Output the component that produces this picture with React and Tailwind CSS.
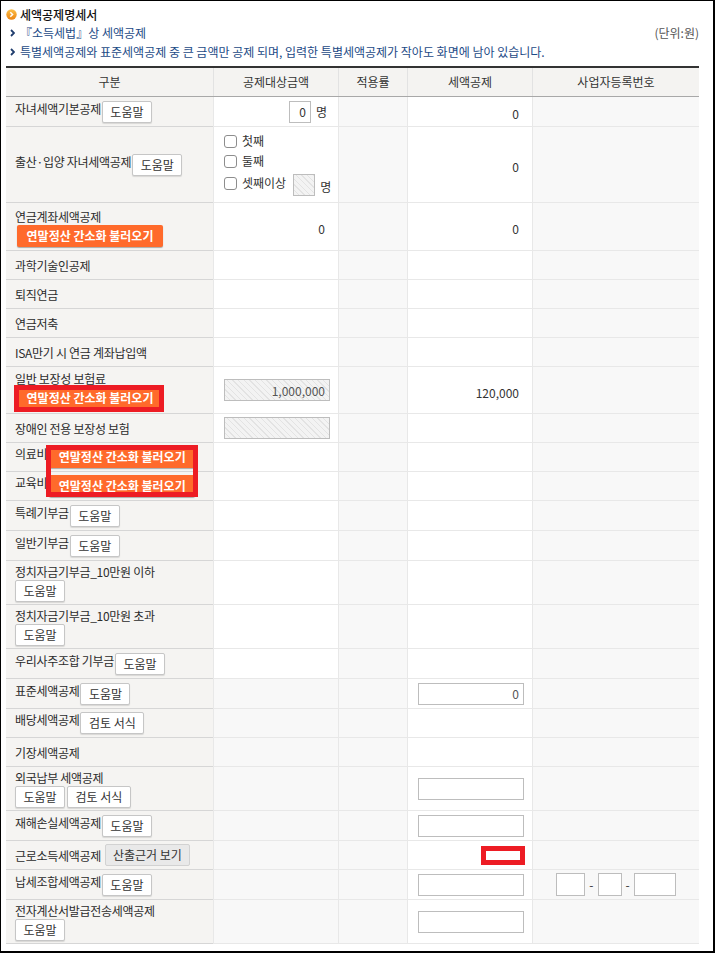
import React from "react";

const cols = "grid grid-cols-[207px_125px_69px_125px_167px]";
const hatch =
  "bg-[image:repeating-linear-gradient(45deg,#f3f3f3_0px,#f3f3f3_3px,#e3e3e3_3px,#e3e3e3_4px)]";

const HelpBtn = ({ label = "도움말", w = "w-[50px]", className = "" }) => (
  <button
    type="button"
    className={`${w} h-[22px] shrink-0 rounded-[2px] border border-[#c6c6c6] bg-white text-[12px] leading-[20px] text-[#333] shadow-[0_1px_1px_rgba(0,0,0,0.12)] ${className}`}
  >
    {label}
  </button>
);

const OrangeBtn = ({ className = "" }) => (
  <button
    type="button"
    className={`h-[22px] w-[146px] shrink-0 rounded-[2px] bg-[#ff6a2b] text-[12px] font-bold leading-[22px] text-white shadow-[0_1px_1px_rgba(0,0,0,0.3)] ${className}`}
  >
    연말정산 간소화 불러오기
  </button>
);

const Row = ({ h, label, c2, c4, c5, gray2, labelClass = "" }) => (
  <div className={`${cols} ${h}`}>
    <div
      className={`flex flex-col justify-center border-b border-[#d6d6d6] bg-[#f5f4f2] pl-[9px] ${labelClass}`}
    >
      {label}
    </div>
    <div
      className={`border-b border-l border-[#e8e8e8] ${gray2 ? "bg-[#f8f8f8]" : "bg-white"}`}
    >
      {c2}
    </div>
    <div className="border-b border-l border-[#e8e8e8] bg-[#f8f8f8]" />
    <div className="border-b border-l border-[#e8e8e8] bg-white">{c4}</div>
    <div className="border-b border-l border-[#e8e8e8] bg-[#f8f8f8]">{c5}</div>
  </div>
);

const Text = ({ children }) => (
  <span className="whitespace-nowrap leading-[15px] tracking-[-0.3px] text-[#2b2b2b]">
    {children}
  </span>
);

const Inline = ({ text, btn = <HelpBtn /> }) => (
  <div className="flex items-start">
    <Text>{text}</Text>
    <span className="ml-[1px]">{btn}</span>
  </div>
);

const Val = ({ children }) => (
  <div className="flex h-full items-center justify-end pt-[5px] pr-[13px]">
    {children}
  </div>
);

const BoxInput = ({ value = "", hatched }) => (
  <div className="flex h-full items-center pl-[10px]">
    <input
      readOnly
      value={value}
      className={`h-[22px] w-[106px] border border-[#bdbdbd] px-[4px] text-right text-[12px] text-[#555] outline-none ${hatched ? hatch : "bg-white"}`}
    />
  </div>
);

const Check = ({ label }) => (
  <div className="flex h-[20px] items-center">
    <span className="h-[13px] w-[13px] rounded-[3px] border border-[#8d8d8d] bg-white" />
    <span className="ml-[5px] leading-[16px]">{label}</span>
  </div>
);

const Chevron = () => (
  <svg width="5" height="8" viewBox="0 0 5 8" className="shrink-0">
    <path d="M1 1 L4 4 L1 7" fill="none" stroke="#1f3d6d" strokeWidth="1.8" />
  </svg>
);

const TitleIcon = () => (
  <svg width="11" height="11" viewBox="0 0 11 11" className="shrink-0">
    <defs>
      <linearGradient id="og" x1="0" y1="0" x2="0" y2="1">
        <stop offset="0" stopColor="#fbc04a" />
        <stop offset="1" stopColor="#ec8412" />
      </linearGradient>
    </defs>
    <circle cx="5.5" cy="5.5" r="5.2" fill="url(#og)" />
    <path d="M4.3 3.2 L6.6 5.5 L4.3 7.8" fill="none" stroke="#fff" strokeWidth="1.5" />
  </svg>
);

export default function App() {
  return (
    <div className="relative h-[953px] w-[715px] border-t border-r-2 border-b-2 border-l border-black bg-white font-['Noto_Sans_CJK_KR','Noto_Sans',sans-serif] text-[12px] text-[#333]">
      <div className="pt-[5px] pl-[5px] pr-[14px]">
        <div className="flex h-[17px] items-center">
          <TitleIcon />
          <span className="ml-[3px] font-medium text-[#111]">세액공제명세서</span>
        </div>
        <div className="flex h-[19px] items-center pl-[4px]">
          <Chevron />
          <span className="ml-[5px] text-[#1c4a86]">『소득세법』상 세액공제</span>
          <span className="ml-auto text-[#555]">(단위:원)</span>
        </div>
        <div className="flex h-[19px] items-center pl-[4px]">
          <Chevron />
          <span className="ml-[5px] text-[#1c4a86]">
            특별세액공제와 표준세액공제 중 큰 금액만 공제 되며, 입력한 특별세액공제가 작아도 화면에 남아 있습니다.
          </span>
        </div>
      </div>

      <div className="mt-[5px] ml-[5px] w-[693px]">
        <div className="h-[2px] bg-[#333]" />
        <div className={`${cols} h-[29px] border-b border-[#a8a8a8] bg-[#f4f3f1]`}>
          <div className="flex items-center justify-center">구분</div>
          <div className="flex items-center justify-center border-l border-[#e2e2e2]">공제대상금액</div>
          <div className="flex items-center justify-center border-l border-[#e2e2e2]">적용률</div>
          <div className="flex items-center justify-center border-l border-[#e2e2e2]">세액공제</div>
          <div className="flex items-center justify-center border-l border-[#e2e2e2]">사업자등록번호</div>
        </div>

        <Row
          h="h-[30px]"
          label={<Inline text="자녀세액기본공제" />}
          c2={
            <div className="flex h-full items-center justify-end pr-[11px]">
              <input
                readOnly
                value="0"
                className="h-[22px] w-[22px] border border-[#bdbdbd] bg-white pr-[4px] text-right text-[12px] outline-none"
              />
              <span className="ml-[5px]">명</span>
            </div>
          }
          c4={<Val>0</Val>}
        />
        <Row
          h="h-[76px]"
          label={<Inline text="출산·입양 자녀세액공제" />}
          c2={
            <div className="flex flex-col pt-[4px] pl-[10px]">
              <Check label="첫째" />
              <Check label="둘째" />
              <div className="flex h-[26px] items-start">
                <div className="mt-[2px]">
                  <Check label="셋째이상" />
                </div>
                <span className={`mt-[3px] ml-[7px] h-[22px] w-[22px] border border-[#bdbdbd] ${hatch}`} />
                <span className="mt-[8px] ml-[5px] leading-[16px]">명</span>
              </div>
            </div>
          }
          c4={<Val>0</Val>}
        />
        <Row
          h="h-[48px]"
          labelClass="pt-[3px]"
          label={
            <div className="flex flex-col items-start">
              <Text>연금계좌세액공제</Text>
              <OrangeBtn className="mt-[1px] ml-[2px]" />
            </div>
          }
          c2={<Val>0</Val>}
          c4={<Val>0</Val>}
        />
        <Row h="h-[29px]" label={<Text>과학기술인공제</Text>} />
        <Row h="h-[29px]" label={<Text>퇴직연금</Text>} />
        <Row h="h-[29px]" label={<Text>연금저축</Text>} />
        <Row h="h-[29px]" label={<Text>ISA만기 시 연금 계좌납입액</Text>} />
        <Row
          h="h-[47px]"
          label={
            <div className="flex flex-col items-start">
              <Text>일반 보장성 보험료</Text>
              <span className="relative mt-[1px] ml-[2px]">
                <OrangeBtn />
                <span className="absolute -top-[2px] -left-[3px] h-[27px] w-[150px] border-[5px] border-[#ed1c24]" />
              </span>
            </div>
          }
          c2={<BoxInput value="1,000,000" hatched />}
          c4={<Val>120,000</Val>}
        />
        <Row h="h-[29px]" label={<Text>장애인 전용 보장성 보험</Text>} c2={<BoxInput hatched />} />
        <Row
          h="h-[29px]"
          label={
            <div className="flex items-start">
              <Text>의료비</Text>
              <span className="relative z-10 ml-[2px]">
                <OrangeBtn />
                <span className="absolute -top-[1px] -left-[3px] h-[52px] w-[152px] border-[5px] border-[#ed1c24]" />
              </span>
            </div>
          }
        />
        <Row
          h="h-[29px]"
          label={
            <div className="flex items-start">
              <Text>교육비</Text>
              <OrangeBtn className="ml-[2px]" />
            </div>
          }
        />
        <Row h="h-[30px]" label={<Inline text="특례기부금" />} />
        <Row h="h-[30px]" label={<Inline text="일반기부금" />} />
        <Row
          h="h-[44px]"
          label={
            <div className="flex flex-col items-start">
              <Text>정치자금기부금_10만원 이하</Text>
              <HelpBtn className="mt-[1px]" />
            </div>
          }
        />
        <Row
          h="h-[44px]"
          label={
            <div className="flex flex-col items-start">
              <Text>정치자금기부금_10만원 초과</Text>
              <HelpBtn className="mt-[1px]" />
            </div>
          }
        />
        <Row h="h-[30px]" label={<Inline text="우리사주조합 기부금" />} />
        <Row
          h="h-[30px]"
          gray2
          label={<Inline text="표준세액공제" />}
          c4={<BoxInput value="0" />}
        />
        <Row
          h="h-[29px]"
          gray2
          label={<Inline text="배당세액공제" btn={<HelpBtn label="검토 서식" w="w-[64px]" />} />}
        />
        <Row h="h-[29px]" gray2 label={<Text>기장세액공제</Text>} />
        <Row
          h="h-[44px]"
          gray2
          label={
            <div className="flex flex-col items-start">
              <Text>외국납부 세액공제</Text>
              <div className="mt-[1px] flex gap-[2px]">
                <HelpBtn />
                <HelpBtn label="검토 서식" w="w-[64px]" />
              </div>
            </div>
          }
          c4={<BoxInput />}
        />
        <Row h="h-[30px]" gray2 label={<Inline text="재해손실세액공제" />} c4={<BoxInput />} />
        <Row
          h="h-[29px]"
          gray2
          label={
            <div className="flex items-center">
              <Text>근로소득세액공제</Text>
              <button
                type="button"
                className="ml-[4px] h-[22px] w-[85px] rounded-[2px] border border-[#d2d2d2] bg-[#e9e9e9] text-[12px] leading-[20px] text-[#333]"
              >
                산출근거 보기
              </button>
            </div>
          }
          c4={
            <div className="flex h-full items-center justify-end pr-[7px]">
              <span className="h-[19px] w-[44px] border-[5px] border-[#ed1c24] bg-white" />
            </div>
          }
        />
        <Row
          h="h-[30px]"
          gray2
          label={<Inline text="납세조합세액공제" />}
          c4={<BoxInput />}
          c5={
            <div className="flex h-full items-center justify-center">
              <span className="h-[23px] w-[29px] border border-[#bdbdbd] bg-white" />
              <span className="mx-[4px]">-</span>
              <span className="h-[23px] w-[24px] border border-[#bdbdbd] bg-white" />
              <span className="mx-[4px]">-</span>
              <span className="h-[23px] w-[42px] border border-[#bdbdbd] bg-white" />
            </div>
          }
        />
        <Row
          h="h-[44px]"
          gray2
          label={
            <div className="flex flex-col items-start">
              <Text>전자계산서발급전송세액공제</Text>
              <HelpBtn className="mt-[1px]" />
            </div>
          }
          c4={<BoxInput />}
        />
      </div>
    </div>
  );
}
